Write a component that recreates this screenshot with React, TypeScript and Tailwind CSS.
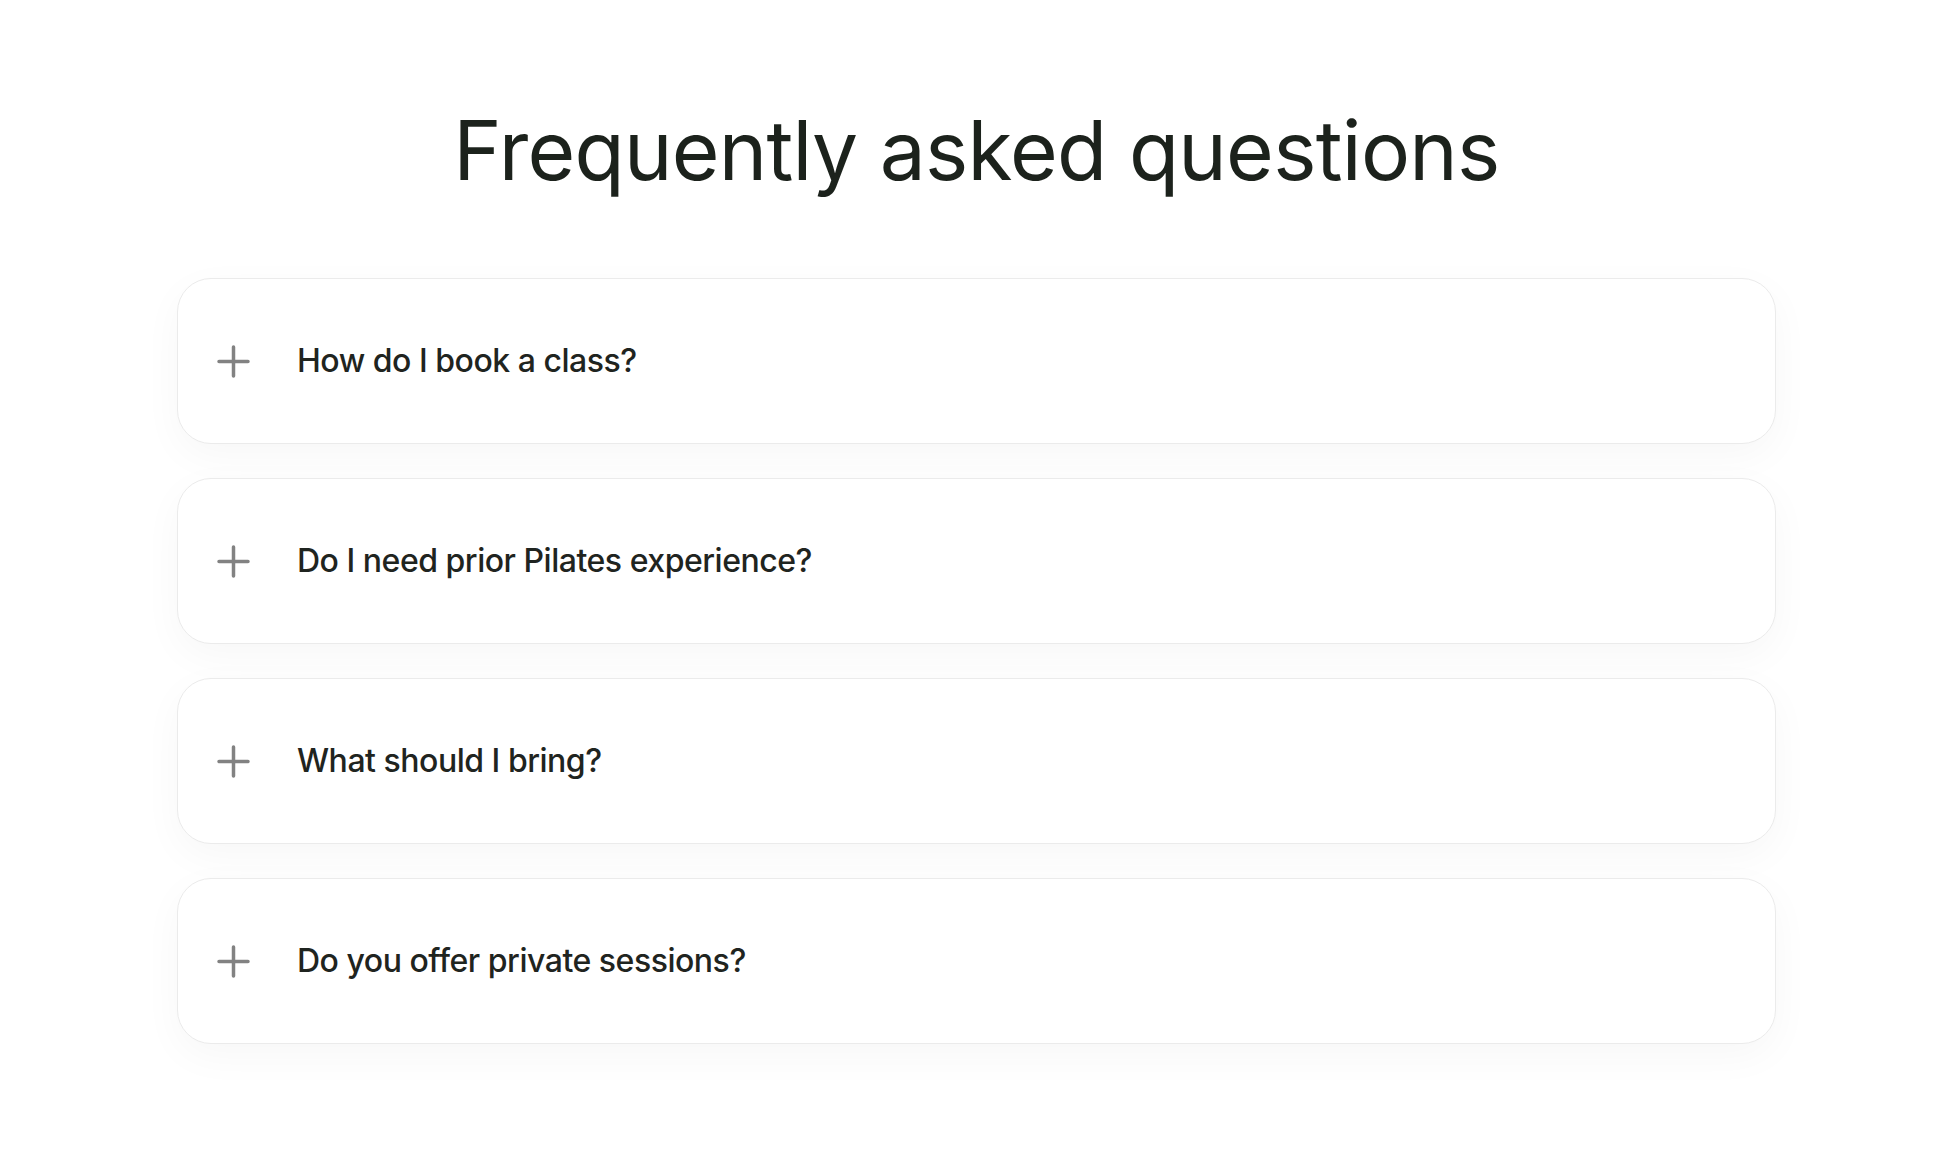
import React from "react";

const faqs = [
  "How do I book a class?",
  "Do I need prior Pilates experience?",
  "What should I bring?",
  "Do you offer private sessions?",
];

function Plus() {
  return (
    <svg width="33" height="33" viewBox="0 0 33 33" fill="none" className="shrink-0">
      <path d="M16.5 2V31M2 16.5H31" stroke="#828282" strokeWidth="3.5" strokeLinecap="round" />
    </svg>
  );
}

export default function App() {
  return (
    <div
      className="min-h-[1152px] w-full bg-white pl-[177px] pr-[164px] pt-[110px]"
      style={{ fontFamily: "Inter, 'Noto Sans', sans-serif" }}
    >
      <h1 className="text-center text-[82px] leading-[1] font-normal tracking-[-0.009em] text-[#1c221c]">
        Frequently asked questions
      </h1>
      <div className="mt-[86px] flex flex-col gap-[34px]">
        {faqs.map((q) => (
          <div
            key={q}
            className="flex h-[166px] items-center gap-[47px] rounded-[34px] border border-[#ebebeb] bg-white pl-[39px] shadow-[0_12px_40px_rgba(0,0,0,0.035)]"
          >
            <Plus />
            <span className="text-[32px] font-medium tracking-[-0.015em] text-[#1f2420]">{q}</span>
          </div>
        ))}
      </div>
    </div>
  );
}
